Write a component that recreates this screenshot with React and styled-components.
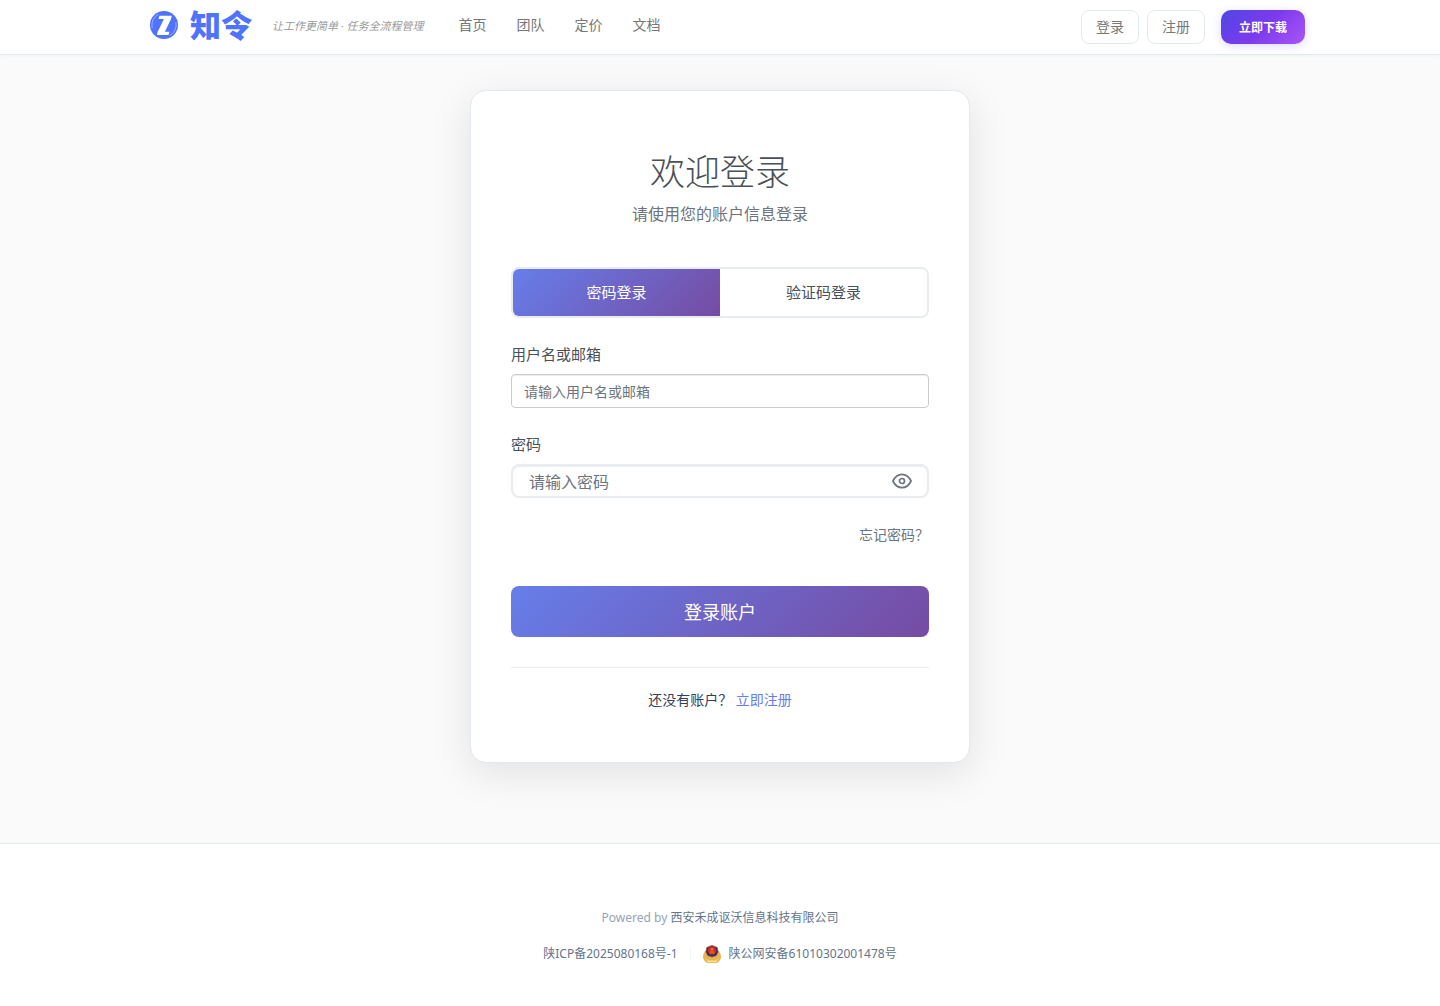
import React, { useState } from "react";
import styled, { createGlobalStyle, css } from "styled-components";

const GlobalStyle = createGlobalStyle`
  *, *::before, *::after { box-sizing: border-box; }
  body {
    margin: 0;
    background: #fafafa;
    color: #334155;
    font: 14px/20px "Noto Sans", "Noto Sans CJK SC", sans-serif;
  }
  a { text-decoration: none; }
  button, input { font-family: inherit; }
`;

const Page = styled.div`
  min-height: 100vh;
  display: flex;
  flex-direction: column;
`;

const Header = styled.header`
  background: #fff;
  border-bottom: 1px solid #e2e8f0;
  box-shadow: 0 1px 3px rgba(0, 0, 0, 0.03);
`;

const HeaderInner = styled.div`
  max-width: 1200px;
  height: 54px;
  margin: 0 auto;
  padding: 0 15px 0 30px;
  display: flex;
  align-items: center;
`;

const Brand = styled.a`
  display: flex;
  align-items: center;
  gap: 12px;
  padding-bottom: 4px;
  color: #4f74fb;
`;

const BrandName = styled.span`
  font-size: 31px;
  line-height: 32px;
  font-weight: 900;
`;

const Tagline = styled.span`
  margin-left: 20px;
  padding-bottom: 2px;
  font-size: 11px;
  line-height: 20px;
  font-style: italic;
  color: #999;
`;

const Nav = styled.nav`
  display: flex;
  gap: 30px;
  margin-left: 35px;
  padding-bottom: 4px;
`;

const NavLink = styled.a`
  color: #777;
`;

const Actions = styled.div`
  display: flex;
  gap: 8px;
  margin-left: auto;
`;

const HeaderButton = styled.button`
  height: 34px;
  padding: 0 14px 2px;
  border: 1px solid #e2e8f0;
  border-radius: 8px;
  background: #fff;
  color: #777;
  font-size: 14px;
  cursor: pointer;
  ${(p) =>
    p.$primary &&
    css`
      margin-left: 8px;
      padding: 0 18px;
      border: 0;
      border-radius: 10px;
      background: linear-gradient(135deg, #4f46e5 0%, #7c3aed 50%, #a855f7 100%);
      box-shadow: 0 2px 8px rgba(79, 70, 229, 0.2);
      color: #fff;
      font-size: 12px;
      font-weight: 600;
    `}
`;

const Main = styled.main`
  flex: 1;
  display: flex;
  justify-content: center;
  align-items: flex-start;
  padding: 35px 20px 80px;
`;

const Card = styled.section`
  width: 100%;
  max-width: 500px;
  padding: 57px 40px 52px;
  background: #fff;
  border: 1px solid #e2e8f0;
  border-radius: 16px;
  box-shadow: 0 10px 40px rgba(0, 0, 0, 0.1);
`;

const Title = styled.h1`
  margin: 0 0 10px;
  text-align: center;
  font-size: 35px;
  line-height: 44px;
  font-weight: 300;
  font-family: "Noto Sans CJK SC", sans-serif;
  color: #495057;
`;

const Subtitle = styled.p`
  margin: 0 0 41px;
  text-align: center;
  font-size: 16px;
  line-height: 24px;
  color: #6c757d;
`;

const Tabs = styled.div`
  display: flex;
  height: 51px;
  margin-bottom: 24px;
  border: 2px solid #e9ecef;
  border-radius: 8px;
  overflow: hidden;
`;

const Tab = styled.button`
  flex: 1;
  border: 0;
  padding: 0 0 2px;
  font-size: 15px;
  cursor: pointer;
  background: ${(p) => (p.$active ? "linear-gradient(135deg, #667eea 0%, #764ba2 100%)" : "#fff")};
  color: ${(p) => (p.$active ? "#fff" : "#495057")};
`;

const Field = styled.div`
  display: flex;
  flex-direction: column;
  gap: 8px;
  margin-bottom: 24px;
`;

const Label = styled.label`
  font-size: 15px;
  line-height: 24px;
  color: #495057;
`;

const InputBox = styled.div`
  display: flex;
  align-items: center;
  height: 34px;
  background: #fff;
  border: 1px solid #ccc;
  border-radius: 4px;
  padding: 0 12px;
  box-shadow: inset 0 1px 1px rgba(0, 0, 0, 0.075);
  ${(p) =>
    p.$large &&
    css`
      border: 2px solid #e9ecef;
      border-radius: 8px;
      padding: 0 15px 0 16px;
    `}
`;

const Input = styled.input`
  flex: 1;
  min-width: 0;
  padding: 2px 0 0;
  border: 0;
  outline: 0;
  background: none;
  color: #555;
  font-size: ${(p) => (p.$large ? "16px" : "14px")};
  line-height: 24px;
  &::placeholder { color: #6c757d; opacity: 1; }
`;

const IconButton = styled.button`
  display: flex;
  padding: 0;
  border: 0;
  background: none;
  color: #6c757d;
  cursor: pointer;
`;

const ForgotRow = styled.div`
  display: flex;
  justify-content: flex-end;
  margin: 27px 0 41px;
`;

const ForgotLink = styled.a`
  color: #6c757d;
`;

const Submit = styled.button`
  width: 100%;
  height: 51px;
  padding: 0 0 2px;
  border: 0;
  border-radius: 8px;
  background: linear-gradient(135deg, #667eea 0%, #764ba2 100%);
  color: #fff;
  font-size: 18px;
  cursor: pointer;
`;

const SignUp = styled.p`
  margin: 30px 0 0;
  padding-top: 22px;
  border-top: 1px solid #e9ecef;
  text-align: center;
`;

const SignUpLink = styled.a`
  color: #667eea;
`;

const Footer = styled.footer`
  padding: 64px 20px 42px;
  background: #fff;
  border-top: 1px solid #e2e8f0;
  display: flex;
  flex-direction: column;
  align-items: center;
  gap: 16px;
  font-size: 12px;
  line-height: 20px;
  color: #94a3b8;
`;

const FooterLine = styled.div`
  display: flex;
  align-items: center;
`;

const Company = styled.span`
  color: #64748b;
`;

const FooterLink = styled.a`
  display: flex;
  align-items: center;
  gap: 8px;
  color: #64748b;
`;

const Divider = styled.span`
  width: 1px;
  height: 12px;
  margin: 0 12px;
  background: #f1f5f9;
`;

const LogoMark = () => (
  <svg width="28" height="28" viewBox="0 0 28 28" aria-hidden="true">
    <circle cx="14" cy="14" r="14" fill="#4f74fb" />
    <path d="M9.500 4.700h12.200l-.7 3.200-6.100 12.900h4.500l-.9 3.300H6.900l.7-3 6.300-13.100H8.500z" fill="#fff" />
    <path d="M8.500 3.200A12.200 12.200 0 0 0 2.200 17M19.500 24.800A12.200 12.200 0 0 0 25.800 11" fill="none" stroke="#a9baff" strokeWidth=".8" />
  </svg>
);

const EyeIcon = () => (
  <svg width="20" height="20" viewBox="0 0 20 20" fill="none" stroke="currentColor" strokeWidth="1.7" aria-hidden="true">
    <path d="M.9 10C3.200 5.400 6.300 3.300 10 3.300S16.800 5.400 19.100 10C16.800 14.600 13.700 16.700 10 16.700S3.200 14.600.9 10z" strokeLinejoin="round" />
    <circle cx="10" cy="10" r="2.500" />
  </svg>
);

const PoliceBadge = () => (
  <svg width="18" height="18" viewBox="0 0 18 18" aria-hidden="true">
    <path d="M2 6 .3 9.500 0 13l2 3.500L4.500 18h9l2.500-1.500 2-3.500-.3-3.500L16 6z" fill="#e9b44c" />
    <path d="M2 13 5 15.500h8l3-2.500-3 4.200H5z" fill="#fbe39a" />
    <path d="M9 .3 11.500 1.200 14.500 2.500 15.300 7 13.500 10.700 9 12.300 4.500 10.700 2.700 7 3.500 2.500 6.500 1.200z" fill="#2b2e63" stroke="#c98a4c" strokeWidth=".7" />
    <circle cx="9" cy="5.600" r="4.200" fill="#dc2a20" />
    <path d="m9 2.300.6 1.200 1.300.2-.9.900.2 1.300L9 5.300l-1.200.6.200-1.300-.9-.9 1.300-.2z" fill="#f2742a" />
    <path d="M6.500 7.800h5M7.200 6.800h3.600" stroke="#f07a2a" strokeWidth=".7" />
  </svg>
);

const navItems = ["首页", "团队", "定价", "文档"];
const modes = ["密码登录", "验证码登录"];

export default function App() {
  const [mode, setMode] = useState(0);
  const [visible, setVisible] = useState(false);

  return (
    <Page>
      <GlobalStyle />
      <Header>
        <HeaderInner>
          <Brand href="#">
            <LogoMark />
            <BrandName>知令</BrandName>
          </Brand>
          <Tagline>让工作更简单 · 任务全流程管理</Tagline>
          <Nav>
            {navItems.map((item) => (
              <NavLink href="#" key={item}>{item}</NavLink>
            ))}
          </Nav>
          <Actions>
            <HeaderButton type="button">登录</HeaderButton>
            <HeaderButton type="button">注册</HeaderButton>
            <HeaderButton type="button" $primary>立即下载</HeaderButton>
          </Actions>
        </HeaderInner>
      </Header>

      <Main>
        <Card>
          <Title>欢迎登录</Title>
          <Subtitle>请使用您的账户信息登录</Subtitle>
          <Tabs role="tablist">
            {modes.map((label, i) => (
              <Tab
                key={label}
                type="button"
                role="tab"
                aria-selected={mode === i}
                $active={mode === i}
                onClick={() => setMode(i)}
              >
                {label}
              </Tab>
            ))}
          </Tabs>
          <form onSubmit={(e) => e.preventDefault()}>
            <Field>
              <Label htmlFor="username">用户名或邮箱</Label>
              <InputBox>
                <Input id="username" type="text" placeholder="请输入用户名或邮箱" />
              </InputBox>
            </Field>
            <Field>
              <Label htmlFor="password">密码</Label>
              <InputBox $large>
                <Input id="password" type={visible ? "text" : "password"} placeholder="请输入密码" $large />
                <IconButton type="button" aria-label="显示密码" onClick={() => setVisible(!visible)}>
                  <EyeIcon />
                </IconButton>
              </InputBox>
            </Field>
            <ForgotRow>
              <ForgotLink href="#">忘记密码？</ForgotLink>
            </ForgotRow>
            <Submit type="submit">登录账户</Submit>
          </form>
          <SignUp>
            还没有账户？ <SignUpLink href="#">立即注册</SignUpLink>
          </SignUp>
        </Card>
      </Main>

      <Footer>
        <div>
          Powered by <Company>西安禾成讴沃信息科技有限公司</Company>
        </div>
        <FooterLine>
          <FooterLink href="#">陕ICP备2025080168号-1</FooterLink>
          <Divider />
          <FooterLink href="#">
            <PoliceBadge />
            陕公网安备61010302001478号
          </FooterLink>
        </FooterLine>
      </Footer>
    </Page>
  );
}
